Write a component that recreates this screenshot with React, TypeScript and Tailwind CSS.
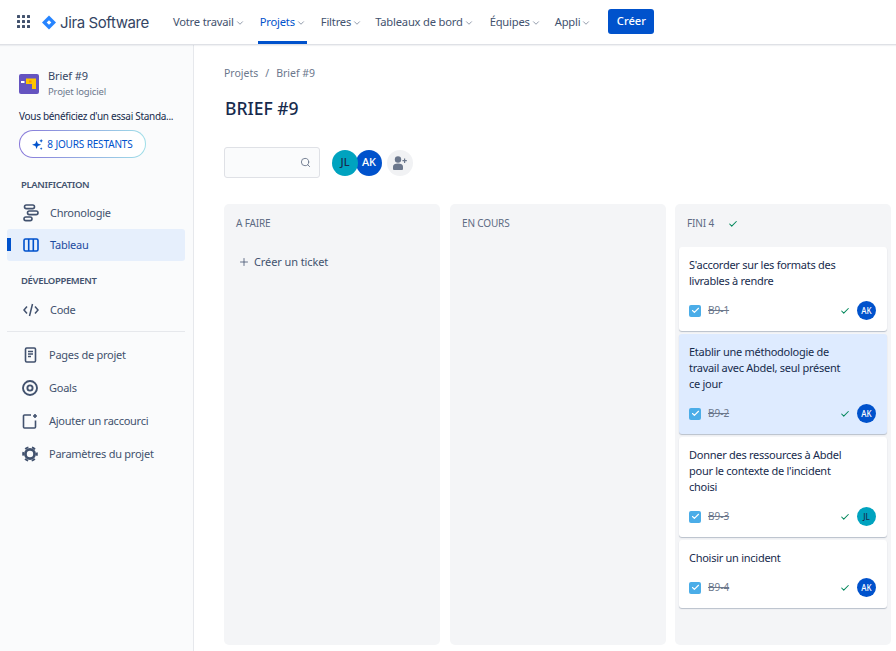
import React from "react";
import { ChevronDown, Search, Plus, Check } from "lucide-react";

const font = "font-['Noto_Sans','Open_Sans',sans-serif]";

function NavItem({ label, active, gap }: { label: string; active?: boolean; gap: string }) {
  return (
    <div className={`relative h-[44px] pl-[2px] pr-[1px] flex items-center text-[11.2px] tracking-[-0.2px] ${gap} ${active ? "text-[#0052cc]" : "text-[#42526e]"}`}>
      <span>{label}</span>
      <ChevronDown size={10} strokeWidth={2.2} className="ml-[1px] mt-[1px] text-[#8993a4]" />
      {active && <div className="absolute left-0 right-0 bottom-0 h-[3px] bg-[#0052cc]" />}
    </div>
  );
}

function Logo() {
  return (
    <div className="flex items-center">
      <svg width="14" height="15" viewBox="0 0 14 14" className="mr-[4px]">
        <path fill="#2684ff" d="M7 0 L14 7 L7 14 L0 7 Z" />
        <path fill="#fff" d="M7 4.7 L9.3 7 L7 9.3 L4.7 7 Z" />
      </svg>
      <span className="font-['Inter',sans-serif] text-[#344563] text-[15px] leading-none tracking-[-0.4px]">Jira Software</span>
    </div>
  );
}

function Grid() {
  const dots = Array.from({ length: 9 });
  return (
    <div className="grid grid-cols-3 gap-[2px] w-[13px] mr-[12px] -mt-[1px]">
      {dots.map((_, i) => (
        <div key={i} className="w-[3px] h-[3px] bg-[#42526e] rounded-[0.5px]" />
      ))}
    </div>
  );
}

function Header() {
  return (
    <header className="h-[45px] shrink-0 flex items-center pl-[17px] bg-white border-b border-[#dfe1e6] shadow-[0_1px_1px_rgba(9,30,66,0.06)] z-10">
      <Grid />
      <Logo />
      <div className="flex ml-[22px]">
        <NavItem label="Votre travail" gap="mr-[12px]" />
        <NavItem label="Projets" active gap="mr-[12px]" />
        <NavItem label="Filtres" gap="mr-[10px]" />
        <NavItem label="Tableaux de bord" gap="mr-[13px]" />
        <NavItem label="Équipes" gap="mr-[11px]" />
        <NavItem label="Appli" gap="mr-[12px]" />
      </div>
      <button className="h-[25px] w-[46px] ml-[4px] -mt-[1px] rounded-[3px] bg-[#0052cc] text-white text-[11.2px] font-medium">Créer</button>
    </header>
  );
}

function SideRow({ icon, label, active, tight }: { icon: React.ReactNode; label: string; active?: boolean; tight?: boolean }) {
  return (
    <div className={`relative h-[32px] ml-[7px] mr-[8px] pl-[15px] flex items-center rounded-[3px] ${active ? "bg-[#e6effc] text-[#1c4ba0]" : "text-[#42526e]"}`}>
      {active && <div className="absolute left-0 top-[9px] w-[4px] h-[13px] bg-[#0052cc]" />}
      <div className={`flex items-center ${tight ? "w-[27px]" : "w-[28px]"}`}>{icon}</div>
      <span className="text-[11px] tracking-[-0.25px]">{label}</span>
    </div>
  );
}

const ico = "#42526e";

function Sidebar() {
  return (
    <aside className="w-[194px] shrink-0 bg-[#fafbfc] border-r border-[#e6e8ec] pt-[23px] flex flex-col">
      <div className="flex items-center pl-[19px]">
        <svg width="20" height="20" viewBox="0 0 20 20">
          <rect width="20" height="20" rx="2" fill="#6554c0" />
          <rect x="2" y="7" width="3.5" height="2" fill="#fff" />
          <path d="M7 4.5h10v10.5h-4v-5H7z" fill="#ffc400" />
          <rect x="10" y="6.5" width="2.5" height="2" fill="#ff8b00" />
        </svg>
        <div className="ml-[9px]">
          <div className="text-[11px] leading-[16px] text-[#344563] tracking-[-0.1px]">Brief #9</div>
          <div className="text-[9.5px] leading-[14px] text-[#6b778c] mt-[1px] tracking-[-0.15px]">Projet logiciel</div>
        </div>
      </div>
      <div className="mt-[10px] pl-[19px] text-[10px] leading-[14px] text-[#172b4d] whitespace-nowrap tracking-[-0.3px]">Vous bénéficiez d'un essai Standa...</div>
      <div className="mt-[7px] ml-[19px] w-[127px] h-[28px] rounded-full p-[1px] bg-gradient-to-r from-[#8777d9] to-[#9fdfe8]">
        <div className="h-full rounded-full bg-white flex items-center justify-center text-[#0052cc] text-[10px] tracking-[-0.15px]">
          <svg width="11" height="11" viewBox="0 0 12 12" className="mr-[4px]">
            <path fill="#0052cc" d="M5 1.5 6.3 5 10 6.3 6.3 7.6 5 11 3.7 7.6 0 6.3 3.7 5Z" />
            <path fill="#0052cc" d="M10 0l.6 1.4L12 2l-1.4.6L10 4l-.6-1.4L8 2l1.4-.6ZM10 9l.5 1 1 .5-1 .5-.5 1-.5-1-1-.5 1-.5Z" />
          </svg>
          8 JOURS RESTANTS
        </div>
      </div>
      <div className="mt-[19px] pl-[21px] h-[16px] flex items-center text-[9.5px] font-semibold text-[#42526e] tracking-[-0.35px]">PLANIFICATION</div>
      <div className="mt-[4px]">
        <SideRow label="Chronologie" icon={
          <svg width="16" height="18" viewBox="0 0 16 18" fill="none" stroke={ico} strokeWidth="1.6" className="ml-[1px]">
            <rect x="1.5" y="1" width="10" height="3.6" rx="1.8" />
            <rect x="4.5" y="7" width="10.5" height="3.6" rx="1.8" />
            <rect x="1" y="13" width="8" height="3.6" rx="1.8" />
          </svg>
        } />
      </div>
      <SideRow active label="Tableau" icon={
        <svg width="16" height="14" viewBox="0 0 16 14" fill="none" stroke="#0052cc" strokeWidth="1.6" className="ml-[1px]">
          <rect x="1" y="1" width="14" height="12" rx="1.5" />
          <path d="M5.7 1v12M10.3 1v12" />
        </svg>
      } />
      <div className="mt-[12px] pl-[21px] h-[16px] flex items-center text-[9.5px] font-semibold text-[#42526e] tracking-[-0.35px]">DÉVELOPPEMENT</div>
      <div className="mt-[5px]">
        <SideRow label="Code" icon={
          <svg width="16" height="14" viewBox="0 0 16 14" fill="none" stroke={ico} strokeWidth="1.5" className="ml-[1px]">
            <path d="M4 3.5 1 7l3 3.5M12 3.5 15 7l-3 3.5M9.5 1 6.5 13" />
          </svg>
        } />
      </div>
      <div className="mt-[5px] ml-[7px] mr-[8px] border-t border-[#e6e8ec]" />
      <div className="mt-[7px] flex flex-col gap-[1px]">
        <SideRow tight label="Pages de projet" icon={
          <svg width="16" height="16" viewBox="0 0 16 16" fill="none" stroke={ico} strokeWidth="1.6" className="ml-[1px]">
            <rect x="2.5" y="1" width="10" height="14" rx="1.2" />
            <path d="M5 4.5h5M5 7h5M5 9.5h3" />
          </svg>
        } />
        <SideRow tight label="Goals" icon={
          <svg width="16" height="16" viewBox="0 0 16 16" fill="none" stroke={ico}>
            <circle cx="8" cy="8" r="7" strokeWidth="1.9" />
            <circle cx="8" cy="8" r="2.6" strokeWidth="1.9" />
          </svg>
        } />
        <SideRow tight label="Ajouter un raccourci" icon={
          <svg width="16" height="16" viewBox="0 0 16 16" fill="none" stroke={ico} strokeWidth="1.6">
            <path d="M9 2H2.5a1 1 0 0 0-1 1v11a1 1 0 0 0 1 1h10a1 1 0 0 0 1-1V7.5" />
            <path d="M13 1v4M11 3h4" />
          </svg>
        } />
        <SideRow tight label="Paramètres du projet" icon={
          <svg width="16" height="16" viewBox="0 0 16 16" fill="none" stroke={ico}>
            <circle cx="8" cy="8" r="4.6" strokeWidth="2.8" />
            <circle cx="8" cy="8" r="6.9" strokeWidth="1.8" strokeDasharray="3.6 3.62" strokeDashoffset="1.8" />
          </svg>
        } />
      </div>
    </aside>
  );
}

function Avatar({ name, small }: { name: string; small?: boolean }) {
  const bg = name === "JL" ? "bg-[#00a3bf] text-[#172b4d]" : "bg-[#0052cc] text-white";
  return (
    <div className={`rounded-full flex items-center justify-center font-medium shrink-0 ${bg} ${small ? "w-[19px] h-[19px] text-[8px]" : "w-[26px] h-[26px] text-[11px]"}`}>
      {name}
    </div>
  );
}

function Card({ title, id, who, selected }: { title: React.ReactNode; id: string; who: string; selected?: boolean }) {
  return (
    <div className={`rounded-[3px] pl-[10px] pr-[11px] pt-[10px] pb-[11px] shadow-[0_1px_1px_rgba(9,30,66,0.25)] ${selected ? "bg-[#deebff]" : "bg-white"}`}>
      <div className="text-[11px] leading-[16px] text-[#172b4d] tracking-[-0.27px]">{title}</div>
      <div className="mt-[12px] h-[19px] flex items-center">
        <div className="w-[12px] h-[12px] rounded-[2px] bg-[#4bade8] flex items-center justify-center">
          <Check size={9} strokeWidth={3} className="text-white" />
        </div>
        <span className="ml-[7px] text-[10px] text-[#6b778c] line-through">{id}</span>
        <Check size={10} strokeWidth={2.5} className="ml-auto mr-[7px] text-[#00875a]" />
        <Avatar name={who} small />
      </div>
    </div>
  );
}

function Column({ title, children, extra }: { title: string; children?: React.ReactNode; extra?: React.ReactNode }) {
  return (
    <div className="w-[216px] h-[441px] shrink-0 rounded-[5px] bg-[#f4f5f7] px-[4px]">
      <div className="h-[39px] pl-[8px] flex items-center text-[10px] text-[#5e6c84] tracking-[-0.15px]">
        {title}
        {extra}
      </div>
      {children}
    </div>
  );
}

function Board() {
  return (
    <div className="mt-[26px] flex gap-[10px]">
      <Column title="A FAIRE">
        <div className="mt-[11px] pl-[10px] flex items-center text-[11px] text-[#42526e] tracking-[-0.1px]">
          <Plus size={12} strokeWidth={1.6} className="mr-[4px]" />
          Créer un ticket
        </div>
      </Column>
      <Column title="EN COURS" />
      <div className="-ml-px">
        <Column title="FINI 4" extra={<Check size={10} strokeWidth={2.5} className="ml-[14px] text-[#00875a]" />}>
          <div className="mt-[4px] flex flex-col gap-[3px]">
            <Card title={<>S'accorder sur les formats des<br />livrables à rendre</>} id="B9-1" who="AK" />
            <Card selected title={<>Etablir une méthodologie de<br />travail avec Abdel, seul présent<br />ce jour</>} id="B9-2" who="AK" />
            <Card title={<>Donner des ressources à Abdel<br />pour le contexte de l'incident<br />choisi</>} id="B9-3" who="JL" />
            <Card title="Choisir un incident" id="B9-4" who="AK" />
          </div>
        </Column>
      </div>
    </div>
  );
}

export default function App() {
  return (
    <div className={`w-[896px] h-[651px] overflow-hidden flex flex-col bg-white ${font}`}>
      <Header />
      <div className="flex flex-1 min-h-0">
        <Sidebar />
        <main className="flex-1 pl-[30px] pt-[20px]">
          <div className="text-[10.5px] leading-[16px] text-[#6b778c]">Projets<span className="mx-[7px]">/</span>Brief #9</div>
          <h1 className="mt-[15px] ml-[1px] text-[17.5px] leading-[24px] font-medium text-[#172b4d]">BRIEF #9</h1>
          <div className="mt-[27px] flex items-center">
            <div className="w-[96px] h-[31px] border border-[#dfe1e6] rounded-[3px] bg-[#fafbfc] flex items-center justify-end pr-[8px]">
              <Search size={11} className="text-[#6b778c]" />
            </div>
            <div className="ml-[12px] flex">
              <div className="z-10 rounded-full"><Avatar name="JL" /></div>
              <div className="-ml-[2px]"><Avatar name="AK" /></div>
            </div>
            <div className="ml-[5px] w-[26px] h-[26px] rounded-full bg-[#f1f2f4] flex items-center justify-center">
              <svg width="16" height="14" viewBox="0 0 16 14" fill="#6b778c">
                <circle cx="6" cy="3.5" r="3.2" />
                <path d="M1 10.5C1 8.5 3 7.5 6 7.5s5 1 5 3V13a1 1 0 0 1-1 1H2a1 1 0 0 1-1-1Z" />
                <path d="M12 2.5h1.2v1.6h1.6v1.2h-1.6v1.6H12V5.3h-1.6V4.1H12Z" />
              </svg>
            </div>
          </div>
          <Board />
        </main>
      </div>
    </div>
  );
}
